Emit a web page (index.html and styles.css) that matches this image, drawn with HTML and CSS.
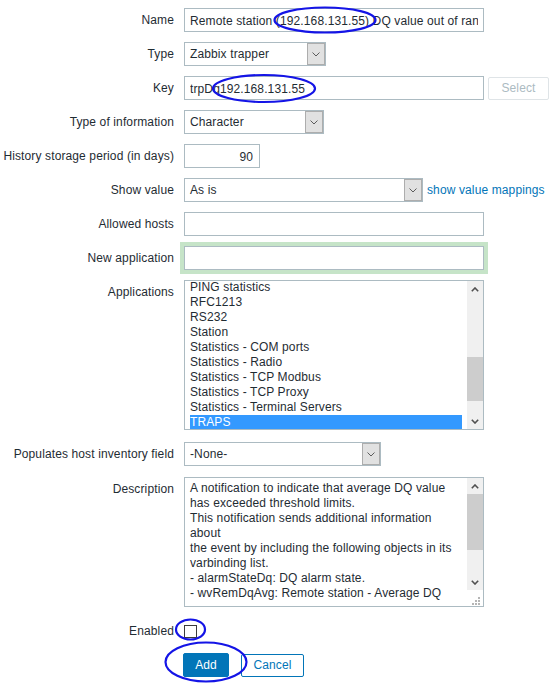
FILE: index.html
```html
<!DOCTYPE html>
<html>
<head>
<meta charset="utf-8">
<title>Item</title>
<link rel="stylesheet" href="styles.css">
</head>
<body>
<div class="page">
  <div class="form">
    <div class="lbl">Name</div>
    <div class="field"><input class="text w300" type="text" value="Remote station (192.168.131.55) DQ value out of range"></div>

    <div class="lbl">Type</div>
    <div class="field">
      <div class="select w142"><span class="sel-text">Zabbix trapper</span><span class="sel-arrow"><svg width="8" height="5" viewBox="0 0 8 5"><polyline points="0.5,0.5 4,4 7.5,0.5" fill="none" stroke="#5c5c5c" stroke-width="1"/></svg></span></div>
    </div>

    <div class="lbl">Key</div>
    <div class="field">
      <input class="text w300" type="text" value="trpDq192.168.131.55">
      <button class="btn-disabled" type="button">Select</button>
    </div>

    <div class="lbl">Type of information</div>
    <div class="field">
      <div class="select w140"><span class="sel-text">Character</span><span class="sel-arrow"><svg width="8" height="5" viewBox="0 0 8 5"><polyline points="0.5,0.5 4,4 7.5,0.5" fill="none" stroke="#5c5c5c" stroke-width="1"/></svg></span></div>
    </div>

    <div class="lbl">History storage period (in days)</div>
    <div class="field"><input class="text w76 num" type="text" value="90"></div>

    <div class="lbl">Show value</div>
    <div class="field">
      <div class="select w239"><span class="sel-text">As is</span><span class="sel-arrow"><svg width="8" height="5" viewBox="0 0 8 5"><polyline points="0.5,0.5 4,4 7.5,0.5" fill="none" stroke="#5c5c5c" stroke-width="1"/></svg></span></div>
      <a class="link" href="#">show value mappings</a>
    </div>

    <div class="lbl">Allowed hosts</div>
    <div class="field"><input class="text w300" type="text" value=""></div>

    <div class="lbl">New application</div>
    <div class="field"><input class="text w300 glow" type="text" value=""></div>

    <div class="lbl">Applications</div>
    <div class="field top">
      <div class="listbox">
        <div class="options">
          <div class="opt">PING statistics</div>
          <div class="opt">RFC1213</div>
          <div class="opt">RS232</div>
          <div class="opt">Station</div>
          <div class="opt">Statistics - COM ports</div>
          <div class="opt">Statistics - Radio</div>
          <div class="opt">Statistics - TCP Modbus</div>
          <div class="opt">Statistics - TCP Proxy</div>
          <div class="opt">Statistics - Terminal Servers</div>
          <div class="opt selected">TRAPS</div>
        </div>
        <div class="scrollbar list-sb">
          <div class="sb-btn"><svg width="8" height="5" viewBox="0 0 8 5"><polyline points="0.8,4.2 4,1 7.2,4.2" fill="none" stroke="#505050" stroke-width="1.6"/></svg></div>
          <div class="sb-track"><div class="sb-thumb list-thumb"></div></div>
          <div class="sb-btn"><svg width="8" height="5" viewBox="0 0 8 5"><polyline points="0.8,0.8 4,4 7.2,0.8" fill="none" stroke="#505050" stroke-width="1.6"/></svg></div>
        </div>
      </div>
    </div>

    <div class="lbl">Populates host inventory field</div>
    <div class="field">
      <div class="select w197"><span class="sel-text">-None-</span><span class="sel-arrow"><svg width="8" height="5" viewBox="0 0 8 5"><polyline points="0.5,0.5 4,4 7.5,0.5" fill="none" stroke="#5c5c5c" stroke-width="1"/></svg></span></div>
    </div>

    <div class="lbl desc-lbl">Description</div>
    <div class="field top desc-field">
      <div class="textarea">
        <div class="ta-text">A notification to indicate that average DQ value<br>has exceeded threshold limits.<br>This notification sends additional information<br>about<br>the event by including the following objects in its<br>varbinding list.<br>- alarmStateDq: DQ alarm state.<br>- wvRemDqAvg: Remote station - Average DQ</div>
        <div class="ta-side">
          <div class="scrollbar ta-sb">
            <div class="sb-btn"><svg width="8" height="5" viewBox="0 0 8 5"><polyline points="0.8,4.2 4,1 7.2,4.2" fill="none" stroke="#505050" stroke-width="1.6"/></svg></div>
            <div class="sb-track"><div class="sb-thumb ta-thumb"></div></div>
            <div class="sb-btn"><svg width="8" height="5" viewBox="0 0 8 5"><polyline points="0.8,0.8 4,4 7.2,0.8" fill="none" stroke="#505050" stroke-width="1.6"/></svg></div>
          </div>
          <div class="grip"><svg width="16" height="16" viewBox="0 0 16 16">
            <rect x="11" y="7" width="2" height="2" fill="#b5b5b5"/>
            <rect x="8" y="10" width="2" height="2" fill="#b5b5b5"/>
            <rect x="11" y="10" width="2" height="2" fill="#b5b5b5"/>
            <rect x="5" y="13" width="2" height="2" fill="#b5b5b5"/>
            <rect x="8" y="13" width="2" height="2" fill="#b5b5b5"/>
            <rect x="11" y="13" width="2" height="2" fill="#b5b5b5"/>
          </svg></div>
        </div>
      </div>
    </div>

    <div class="lbl en-lbl">Enabled</div>
    <div class="field en-field"><span class="checkbox"></span></div>

    <div class="lbl"></div>
    <div class="field buttons">
      <button class="btn-primary" type="button">Add</button>
      <button class="btn-alt" type="button">Cancel</button>
    </div>
  </div>

  <svg class="marks" width="553" height="683" viewBox="0 0 553 683">
    <ellipse cx="325" cy="20" rx="50.5" ry="12.5" fill="none" stroke="#1414e6" stroke-width="2.2"/>
    <ellipse cx="264" cy="88.5" rx="51" ry="13.5" fill="none" stroke="#1414e6" stroke-width="2.2"/>
    <ellipse cx="190.5" cy="629.5" rx="14.5" ry="10" fill="none" stroke="#1414e6" stroke-width="2.2"/>
    <ellipse cx="206" cy="662" rx="40.5" ry="19.5" fill="none" stroke="#1414e6" stroke-width="2.2"/>
  </svg>
</div>
</body>
</html>
```

FILE: styles.css
```css
* { box-sizing: border-box; }

html, body {
  margin: 0;
  padding: 0;
  background: #ffffff;
}

body {
  font-family: "Liberation Sans", Arial, sans-serif;
  font-size: 12px;
  letter-spacing: 0.12px;
  color: #1f2c33;
}

.page {
  position: relative;
  width: 553px;
  height: 683px;
  padding-top: 8px;
  overflow: hidden;
}

.form {
  display: grid;
  grid-template-columns: 174px 1fr;
  column-gap: 10px;
  row-gap: 10px;
}

.lbl {
  text-align: right;
  line-height: 25px;
  height: 24px;
  white-space: nowrap;
}

.field {
  display: flex;
  align-items: center;
  min-height: 24px;
}

.field.top { align-items: flex-start; }

.text {
  height: 24px;
  border: 1px solid #acbbc2;
  padding: 1px 5px 0;
  margin: 0;
  font-family: "Liberation Sans", Arial, sans-serif;
  font-size: 12px;
  letter-spacing: 0.12px;
  color: #1f2c33;
  background: #fff;
  outline: none;
  border-radius: 0;
}

.w300 { width: 300px; }
.w76 { width: 76px; }
.num { text-align: right; padding-right: 6px; }

.glow { box-shadow: 0 0 0 4px #c6e4c8; }

.select {
  display: flex;
  align-items: stretch;
  height: 24px;
  border: 1px solid #acbbc2;
  background: #fff;
}
.w142 { width: 142px; }
.w140 { width: 140px; }
.w239 { width: 239px; }
.w197 { width: 197px; }

.sel-text {
  flex: 1;
  line-height: 23px;
  padding-left: 5px;
  white-space: nowrap;
  overflow: hidden;
}

.sel-arrow {
  width: 18px;
  background: #e1e1e1;
  border: 1px solid #adadad;
  margin: 0;
  display: flex;
  align-items: center;
  justify-content: center;
}

.btn-disabled {
  margin-left: 4px;
  width: 61px;
  height: 23px;
  border: 1px solid #dfe4e7;
  background: #fff;
  color: #acbbc2;
  font-family: "Liberation Sans", Arial, sans-serif;
  font-size: 12px;
  letter-spacing: 0.12px;
  border-radius: 2px;
  padding: 0;
}

.link {
  margin-left: 4px;
  color: #0275b8;
  text-decoration: none;
  white-space: nowrap;
}

.listbox {
  width: 300px;
  height: 150px;
  border: 1px solid #acbbc2;
  display: flex;
  margin-bottom: 2px;
  background: #fff;
}

.options {
  flex: 1;
  overflow: hidden;
  padding: 0 5px;
}

.options .opt:first-child { margin-top: -1px; }

.opt {
  height: 15px;
  line-height: 15px;
  white-space: nowrap;
  color: #1f2c33;
}

.opt.selected {
  background: #3399ff;
  color: #ffffff;
}

.scrollbar {
  width: 16px;
  background: #f0f0f0;
  display: flex;
  flex-direction: column;
}

.sb-btn {
  height: 16px;
  display: flex;
  align-items: center;
  justify-content: center;
}

.sb-track {
  flex: 1;
  position: relative;
}

.sb-thumb {
  position: absolute;
  left: 0;
  right: 0;
  background: #cdcdcd;
}

.list-thumb { top: 60px; height: 44px; }

.textarea {
  width: 300px;
  height: 130px;
  border: 1px solid #acbbc2;
  display: flex;
  background: #fff;
}

.ta-text {
  flex: 1;
  padding: 3px 5px;
  line-height: 15px;
  white-space: nowrap;
  overflow: hidden;
}

.ta-side {
  width: 16px;
  display: flex;
  flex-direction: column;
}

.ta-sb { flex: 1; }

.ta-thumb { top: 0; height: 56px; }

.grip {
  height: 16px;
  background: #fff;
}

.desc-lbl, .desc-field { margin-top: 1px; }

.en-lbl, .en-field { margin-top: 2px; }

.checkbox {
  display: block;
  width: 13px;
  height: 13px;
  border: 1px solid #3b3b3b;
  background: #fff;
}

.buttons { gap: 12px; }

.btn-primary {
  width: 46px;
  height: 24px;
  margin-left: -1px;
  background: #0275b8;
  border: 1px solid #0275b8;
  color: #fff;
  font-family: "Liberation Sans", Arial, sans-serif;
  font-size: 12px;
  letter-spacing: 0.12px;
  border-radius: 2px;
  padding: 0;
}

.btn-alt {
  width: 63px;
  height: 23px;
  background: #fff;
  border: 1px solid #0275b8;
  color: #0275b8;
  font-family: "Liberation Sans", Arial, sans-serif;
  font-size: 12px;
  letter-spacing: 0.12px;
  border-radius: 2px;
  padding: 0;
}

.marks {
  position: absolute;
  left: 0;
  top: 0;
  pointer-events: none;
}
```
